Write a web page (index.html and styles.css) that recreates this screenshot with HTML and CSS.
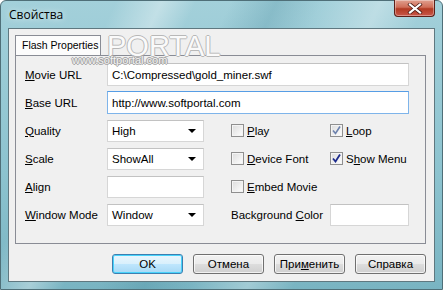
FILE: index.html
```html
<!DOCTYPE html>
<html>
<head>
    <title>Свойства</title>
    <link rel="stylesheet" href="styles.css">
</head>
<body>
<div class="window">
    <div class="titlebar">
        <span class="title">Свойства</span>
        <div class="close-btn">
            <svg width="16" height="11" viewBox="0 0 16 11">
                <path d="M3 1.5 L13 9.5 M13 1.5 L3 9.5" stroke="#4a1a14" stroke-width="3.6" stroke-linecap="square"/>
                <path d="M3 1.5 L13 9.5 M13 1.5 L3 9.5" stroke="#ffffff" stroke-width="2.2" stroke-linecap="square"/>
            </svg>
        </div>
    </div>
    <div class="client">
        <div class="tabs">
            <div class="tab">Flash Properties</div>
        </div>
        <div class="panel">
            <div class="form-grid">
                <label class="lbl"><u>M</u>ovie URL</label>
                <div class="field wide"><div class="textbox">C:\Compressed\gold_miner.swf</div></div>

                <label class="lbl"><u>B</u>ase URL</label>
                <div class="field wide"><div class="textbox focused">http://www.softportal.com</div></div>

                <label class="lbl"><u>Q</u>uality</label>
                <div class="field"><div class="combo">High<span class="arrow"></span></div></div>
                <div class="check"><span class="box"></span><u>P</u>lay</div>
                <div class="check"><span class="box checked light"><svg width="9" height="9" viewBox="0 0 9 9"><path d="M1 4.5 L3.5 7.5 L8 0.5" fill="none" stroke="#6d82ad" stroke-width="1.6"/></svg></span><u>L</u>oop</div>

                <label class="lbl"><u>S</u>cale</label>
                <div class="field"><div class="combo">ShowAll<span class="arrow"></span></div></div>
                <div class="check"><span class="box"></span><u>D</u>evice Font</div>
                <div class="check"><span class="box checked"><svg width="9" height="9" viewBox="0 0 9 9"><path d="M1 4.5 L3.5 7.5 L8 0.5" fill="none" stroke="#1c2a8c" stroke-width="1.8"/></svg></span>S<u>h</u>ow Menu</div>

                <label class="lbl"><u>A</u>lign</label>
                <div class="field"><div class="textbox"></div></div>
                <div class="check span2"><span class="box"></span><u>E</u>mbed Movie</div>

                <label class="lbl"><u>W</u>indow Mode</label>
                <div class="field"><div class="combo">Window<span class="arrow"></span></div></div>
                <label class="lbl">Background <u>C</u>olor</label>
                <div class="field"><div class="textbox"></div></div>
            </div>
        </div>
        <div class="buttons">
            <button class="btn default">OK</button>
            <button class="btn">Отмена</button>
            <button class="btn">При<u>м</u>енить</button>
            <button class="btn">Справка</button>
        </div>
        <!-- watermark of the screenshot source -->
        <div class="wm-big">PORTAL</div>
        <div class="wm-small">www.softportal.com</div>
    </div>
</div>
</body>
</html>
```

FILE: styles.css
```css
body {
    margin: 0;
    padding: 0;
    font-family: "Liberation Sans", Arial, sans-serif;
    font-size: 11.5px;
    color: #000;
}

/* Window frame */
.window {
    width: 443px;
    height: 290px;
    box-sizing: border-box;
    display: flex;
    flex-direction: column;
    background:
        linear-gradient(115deg, rgba(255,255,255,0) 20%, rgba(255,255,255,0.35) 28%, rgba(255,255,255,0) 34%,
            rgba(255,255,255,0) 40%, rgba(60,130,150,0.25) 48%, rgba(255,255,255,0) 56%,
            rgba(255,255,255,0.3) 66%, rgba(255,255,255,0) 74%),
        linear-gradient(180deg, #a3d0da 0%, #8cc3cf 60%, #79b4c2 100%);
    border: 1px solid #4f6f78;
    border-radius: 6px 6px 0 0;
    padding: 0 7px 7px 7px;
}

.titlebar {
    height: 27px;
    display: flex;
    align-items: flex-start;
    justify-content: space-between;
}

.title {
    font-family: "Open Sans", "Liberation Sans", sans-serif;
    font-size: 12px;
    padding-top: 5px;
    padding-left: 1px;
    color: #000;
    text-shadow: 0 0 6px rgba(255,255,255,0.9);
}

.close-btn {
    width: 41px;
    height: 17px;
    margin-top: -1px;
    box-sizing: border-box;
    border: 1px solid #5c1f18;
    border-top: none;
    border-radius: 0 0 4px 4px;
    background: linear-gradient(180deg, #e0a08f 0%, #d06e58 45%, #b23a22 55%, #c9574a 100%);
    display: flex;
    align-items: center;
    justify-content: center;
    box-shadow: inset 0 0 0 1px rgba(255,255,255,0.35);
}

/* Client area */
.client {
    position: relative;
    flex: 1;
    background: #f0f0f0;
    border: 1px solid #5f7880;
    padding: 6px 8px 0 6px;
    display: flex;
    flex-direction: column;
}

.tabs {
    display: flex;
    height: 20px;
}

.tab {
    padding: 3px 3px 0 6px;
    font-size: 10.5px;
    background: #fcfcfc;
    border: 1px solid #898c95;
    border-bottom: none;
    margin-bottom: -1px;
    position: relative;
    z-index: 1;
    height: 20px;
    width: 86px;
    box-sizing: border-box;
    white-space: nowrap;
}

.panel {
    height: 189px;
    box-sizing: border-box;
    border: 1px solid #898c95;
    background: #f0f0f0;
    padding: 7px 0 0 9px;
}

.form-grid {
    display: grid;
    grid-template-columns: 82px 124px 99px 79px;
    grid-auto-rows: 23px;
    row-gap: 5px;
    align-items: center;
}

.lbl {
    white-space: nowrap;
}

.field.wide {
    grid-column: span 3;
}

.field {
    height: 100%;
    display: flex;
    align-items: center;
}

.textbox, .combo {
    height: 22px;
    box-sizing: border-box;
    background: #fff;
    border: 1px solid #d6d6d6;
    border-top-color: #c2c2c2;
    padding: 0 4px;
    display: flex;
    align-items: center;
    white-space: nowrap;
    overflow: hidden;
}

.field.wide .textbox {
    width: 302px;
    height: 23px;
}

.field .textbox, .field .combo {
    width: 97px;
}

.form-grid > .field:last-child .textbox {
    width: 79px;
}

.textbox.focused {
    border-color: #7eb4ea;
    border-top-color: #569de5;
}

.combo {
    justify-content: space-between;
}

.arrow {
    width: 0;
    height: 0;
    border-left: 4px solid transparent;
    border-right: 4px solid transparent;
    border-top: 4px solid #000;
    margin-right: 3px;
}

.check {
    display: flex;
    align-items: center;
    white-space: nowrap;
}

.check.span2 {
    grid-column: span 2;
}

.box {
    width: 13px;
    height: 13px;
    box-sizing: border-box;
    border: 1px solid #8f8f8f;
    background: linear-gradient(135deg, #dcdcdc 0%, #f4f4f4 70%, #ffffff 100%);
    box-shadow: inset 0 0 0 1px #f4f4f4;
    margin-right: 3px;
    display: flex;
    align-items: center;
    justify-content: center;
}

/* Buttons row */
.buttons {
    display: flex;
    justify-content: flex-end;
    gap: 10px;
    padding-top: 10px;
}

.btn {
    width: 71px;
    height: 20px;
    font-family: "Liberation Sans", Arial, sans-serif;
    font-size: 11.5px;
    color: #000;
    border: 1px solid #707070;
    border-radius: 3px;
    background: linear-gradient(180deg, #f2f2f2 0%, #ebebeb 48%, #dddddd 52%, #cfcfcf 100%);
    box-shadow: inset 0 0 0 1px rgba(255,255,255,0.7);
    padding: 0;
}

.btn.default {
    border-color: #3c7fb1;
    background: linear-gradient(180deg, #eaf6fd 0%, #d9f0fc 48%, #bee6fd 52%, #a7d9f5 100%);
    box-shadow: inset 0 0 0 1px #48d3fb;
}

/* Watermark overlay */
.wm-big {
    position: absolute;
    left: 98px;
    top: 1px;
    font-family: "Liberation Sans", Arial, sans-serif;
    font-size: 29px;
    color: #fafafa;
    text-shadow: 1px 0 0 #b8b8b8, -1px 0 0 #b8b8b8, 0 1px 0 #b8b8b8, 0 -1px 0 #b8b8b8;
    pointer-events: none;
    z-index: 2;
}

.wm-small {
    position: absolute;
    left: 63px;
    top: 25px;
    font-size: 11px;
    color: #f4f4f4;
    text-shadow: 1px 0 0 #a0a0a0, -1px 0 0 #a0a0a0, 0 1px 0 #a0a0a0, 0 -1px 0 #a0a0a0;
    z-index: 2;
}
```
